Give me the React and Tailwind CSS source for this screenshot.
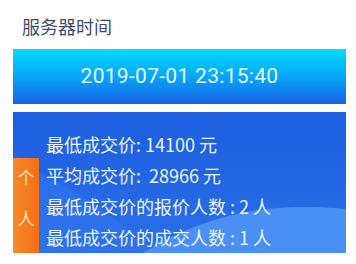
import React from 'react';

const lines = [
  '最低成交价: 14100 元',
  '平均成交价:  28966 元',
  '最低成交价的报价人数 : 2 人',
  '最低成交价的成交人数 : 1 人',
];

export default function App() {
  return (
    <div
      className="w-[356px] h-[264px] bg-white overflow-hidden"
      style={{ fontFamily: '"Noto Sans CJK SC", "Noto Sans", sans-serif' }}
    >
      {/* Title */}
      <div className="pl-[22px] pt-[13px] h-[49px] text-[18px] leading-[26px] text-[#3d4c68]">
        服务器时间
      </div>

      <div className="pl-[13px] pr-[10px]">
        {/* Server time bar */}
        <div className="h-[55px] flex items-center justify-center bg-gradient-to-b from-[#05dcfa] via-[#0aa6f6] to-[#1a62e6]">
          <span
            className="text-[21px] text-[#e4f8ff] tracking-[0.3px]"
            style={{ fontFamily: 'Roboto, "Liberation Sans", sans-serif' }}
          >
            2019-07-01 23:15:40
          </span>
        </div>

        {/* Stats panel */}
        <div className="relative mt-[8px] h-[141px] bg-gradient-to-b from-[#1d5fe0] to-[#2a6ee8] overflow-hidden">
          <svg className="absolute inset-0" width="333" height="141" viewBox="0 0 333 141">
            <path d="M25 60 C 60 75, 110 110, 140 141 L 25 141 Z" fill="#2f74ec" opacity="0.7" />
            <path d="M130 141 C 180 110, 230 95, 290 95 C 310 95, 325 96, 333 97 L 333 141 Z" fill="#4a8ff3" />
          </svg>

          {/* Orange tab */}
          <div className="absolute left-0 bottom-0 w-[26px] h-[95px] bg-gradient-to-r from-[#f58a2a] to-[#f46d12] flex flex-col items-center pt-[8px] gap-[19px] text-[17px] leading-[22px] text-[#ffe7b8]">
            <span>个</span>
            <span>人</span>
          </div>

          <div className="relative pl-[33px] pt-[17px] flex flex-col text-[18px] leading-[31px] text-[#eaf5ff]">
            {lines.map((l) => (
              <div key={l} className="whitespace-pre">{l}</div>
            ))}
          </div>
        </div>
      </div>
    </div>
  );
}
